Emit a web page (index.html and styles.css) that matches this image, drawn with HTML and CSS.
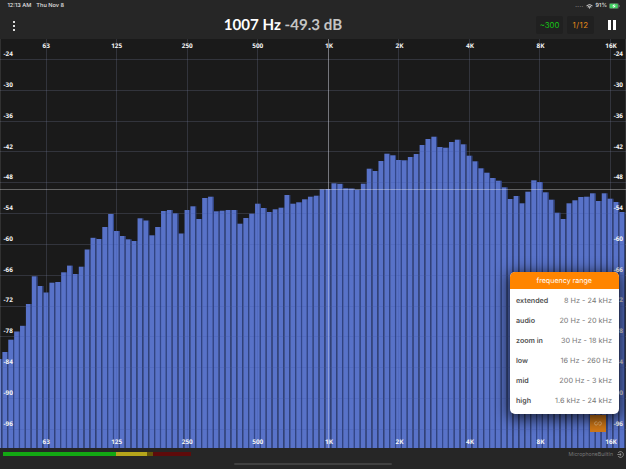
FILE: index.html
```html
<!DOCTYPE html>
<html lang="en">
<head>
    <meta charset="UTF-8">
    <meta name="viewport" content="width=device-width, initial-scale=1.0">
    <title>Spectrum Analyzer</title>
    <link rel="stylesheet" href="styles.css">
</head>
<body>
    <div class="app">
        <!-- System status -->
        <div class="system-bar">
            <div class="system-left">
                <span>12:13 AM</span>
                <span>Thu Nov 8</span>
            </div>
            <div class="system-right">
                <span class="signal">....</span>
                <svg class="wifi" viewBox="0 0 14 10">
                    <path d="M1 3.6Q7-1.4 13 3.6M3.3 6Q7 3 10.7 6" />
                    <path class="solid" d="M4.8 7.2Q7 5.6 9.2 7.2L7 9.6Z" />
                </svg>
                <span>91%</span>
                <svg class="battery" viewBox="0 0 11 6">
                    <rect class="shell" x=".4" y=".4" width="9.2" height="5.2" rx="1.2" />
                    <rect class="charge" x=".7" y=".7" width="8.2" height="4.6" rx=".8" />
                    <path class="bolt" d="M5.6.8L3 3.3H4.8L4.2 5.2L7 2.7H5.2Z" />
                    <path class="tip" d="M10.2 2v2" />
                </svg>
            </div>
        </div>

        <!-- Toolbar -->
        <header class="toolbar">
            <button class="menu-btn" aria-label="Menu">
                <i></i><i></i><i></i>
            </button>
            <h1 class="readout"><span id="frequency">1007 Hz</span> <span class="level">-49.3 dB</span></h1>
            <div class="toolbar-right">
                <button class="chip green">~300</button>
                <button class="chip orange">1/12</button>
                <button class="pause-btn" aria-label="Pause"><i></i><i></i></button>
            </div>
        </header>

        <!-- Spectrum -->
        <main class="spectrum">
            <svg id="chart" width="626" height="409" viewBox="0 39 626 409"></svg>

            <button class="range-btn" aria-label="Range">
                <svg viewBox="0 0 10 6"><path d="M4.2 1.4Q3.6.8 2.8.8a2 2 0 1 0 0 4.2Q4 5 5 3T7.2.8a2 2 0 1 1 0 4.2Q6.4 5 5.8 4.4" /></svg>
            </button>

            <div class="range-menu">
                <div class="range-title">frequency range</div>
                <ul>
                    <li><b>extended</b><span>8 Hz - 24 kHz</span></li>
                    <li><b>audio</b><span>20 Hz - 20 kHz</span></li>
                    <li><b>zoom in</b><span>30 Hz - 18 kHz</span></li>
                    <li><b>low</b><span>16 Hz - 260 Hz</span></li>
                    <li><b>mid</b><span>200 Hz - 3 kHz</span></li>
                    <li><b>high</b><span>1.6 kHz - 24 kHz</span></li>
                </ul>
            </div>
        </main>

        <!-- Input level -->
        <footer class="input-bar">
            <div class="meter">
                <i class="ok"></i><i class="warn"></i><i class="warn-off"></i><i class="clip-off"></i>
            </div>
            <div class="input-name">
                <span>MicrophoneBuiltIn</span>
                <svg viewBox="0 0 8 8"><path d="M1.2 2.2A3.3 3.3 0 1 1 1.2 5.8M.4 4H4.6M3.2 2.5L4.8 4L3.2 5.5" /></svg>
            </div>
            <div class="home-indicator"></div>
        </footer>
    </div>

    <script src="chart.js"></script>
</body>
</html>
```
FILE: styles.css
```css
:root {
    --panel: #262626;
    --chart: #1a1a1a;
    --bar: #5872c8;
    --bar-gap: #32478b;
    --orange: #ff8500;
}

* {
    margin: 0;
    padding: 0;
    box-sizing: border-box;
}

body {
    font-family: Inter, "Liberation Sans", sans-serif;
    background: var(--panel);
    color: #fff;
    overflow: hidden;
    text-rendering: geometricPrecision;
}

button {
    border: none;
    background: none;
    color: inherit;
    font: inherit;
}

.app {
    width: 626px;
    height: 469px;
    display: flex;
    flex-direction: column;
}

/* System status */
.system-bar {
    height: 12px;
    padding: 0 6px 0 7.5px;
    display: flex;
    justify-content: space-between;
    align-items: center;
    font-size: 5.6px;
    font-weight: 500;
    color: #e2e2e2;
}

.system-left {
    display: flex;
    gap: 5px;
}

.system-right {
    display: flex;
    align-items: center;
    gap: 2.5px;
}

.signal {
    color: #999;
    letter-spacing: 0.4px;
}

.wifi {
    width: 7px;
    height: 5px;
    fill: none;
    stroke: #eee;
    stroke-width: 1.7;
}

.wifi .solid {
    fill: #eee;
    stroke: none;
}

.battery {
    width: 11px;
    height: 6px;
    margin-left: -0.5px;
}

.battery .shell {
    fill: none;
    stroke: #777;
    stroke-width: 0.6;
}

.battery .charge {
    fill: #43cf62;
}

.battery .bolt {
    fill: #fff;
}

.battery .tip {
    stroke: #888;
    stroke-width: 0.7;
}

/* Toolbar */
.toolbar {
    height: 27px;
    display: grid;
    grid-template-columns: 120px 326px 1fr;
    align-items: center;
}

.menu-btn {
    width: 4px;
    margin-left: 12px;
    display: flex;
    flex-direction: column;
    align-items: center;
    gap: 2px;
}

.menu-btn i {
    width: 2px;
    height: 2px;
    background: #ddd;
}

.readout {
    font-family: Lato, sans-serif;
    font-size: 15.1px;
    line-height: 20px;
    font-weight: 700;
    white-space: nowrap;
    text-align: center;
    padding-bottom: 1px;
}

.readout .level {
    color: #c4c4c4;
}

.toolbar-right {
    display: flex;
    justify-content: flex-end;
    align-items: center;
    gap: 4px;
    padding: 0 10px 1px 0;
}

.chip {
    width: 27px;
    height: 18px;
    border-radius: 2px;
    background: #202020;
    font-size: 7.8px;
    line-height: 18px;
    text-align: center;
}

.green {
    color: #17c517;
}

.orange {
    color: #e88a18;
    letter-spacing: 0.5px;
}

.pause-btn {
    width: 8px;
    height: 10px;
    margin-left: 10px;
    display: flex;
    justify-content: space-between;
}

.pause-btn i {
    width: 3px;
    height: 10px;
    background: #fff;
}

/* Spectrum */
.spectrum {
    position: relative;
    height: 409px;
    background: var(--chart);
    overflow: hidden;
}

#chart {
    display: block;
}

.bar {
    fill: var(--bar);
}

.bar-gap {
    fill: var(--bar-gap);
}

.grid {
    stroke: #fff;
    stroke-opacity: 0.12;
}

.grid-over {
    stroke: #203580;
    stroke-opacity: 0.1;
}

.grid.edge {
    stroke-opacity: 0.1;
}

.cursor {
    stroke: #fff;
    stroke-opacity: 0.33;
}

.label {
    fill: #f4f4f4;
    font: 700 6.4px "Open Sans", sans-serif;
}

.mid {
    text-anchor: middle;
}

.end {
    text-anchor: end;
}

.range-btn {
    position: absolute;
    left: 590px;
    top: 376px;
    width: 16px;
    height: 17px;
    background: #d17918;
    display: flex;
    align-items: center;
    justify-content: center;
}

.range-btn svg {
    width: 8px;
    height: 5px;
    fill: none;
    stroke: #f5c78f;
    stroke-width: 0.9;
}

.range-menu {
    position: absolute;
    left: 509.5px;
    top: 233px;
    width: 109.5px;
    height: 142px;
    border-radius: 5px;
    background: #fff;
    overflow: hidden;
    box-shadow: 0 3px 14px 3px rgba(0, 0, 0, 0.65);
}

.range-title {
    height: 17px;
    line-height: 17px;
    background: var(--orange);
    font-size: 7.1px;
    text-align: center;
}

.range-menu ul {
    list-style: none;
    padding-top: 1px;
}

.range-menu li {
    height: 20.1px;
    padding: 0 7px 0 6.5px;
    display: flex;
    align-items: center;
    justify-content: space-between;
    font-size: 7.3px;
    color: #777;
    white-space: nowrap;
}

.range-menu b {
    font-size: 7.1px;
    color: #505050;
    font-weight: 600;
}

/* Input level */
.input-bar {
    position: relative;
    height: 21px;
    padding: 4px 2px 0 3px;
    display: flex;
    justify-content: space-between;
    align-items: flex-start;
}

.meter {
    display: flex;
    height: 4px;
}

.meter .ok {
    width: 113px;
    background: #13a713;
}

.meter .warn {
    width: 31px;
    background: #b5a51b;
}

.meter .warn-off {
    width: 6px;
    background: #645409;
}

.meter .clip-off {
    width: 38px;
    background: #5e0b0b;
}

.input-name {
    display: flex;
    align-items: center;
    gap: 4px;
    margin-top: -2px;
    height: 8px;
    font-size: 5.2px;
    color: #777;
    text-rendering: auto;
}

.input-name svg {
    width: 7px;
    height: 7px;
    fill: none;
    stroke: #aaa;
    stroke-width: 0.8;
}

.home-indicator {
    position: absolute;
    left: 234px;
    top: 15px;
    width: 158px;
    height: 2px;
    border-radius: 1px;
    background: #414141;
}
```
FILE: chart.js
```js
const NS = 'http://www.w3.org/2000/svg';
const chart = document.getElementById('chart');

// Top edge of each 1/12 octave band
const tops = [
    359, 352, 339.7, 331.5, 325.8, 304, 276.3, 286, 292.5, 282.7, 282, 272.3,
    265.6, 274, 266.7, 249.5, 237.8, 239, 227, 214, 231, 236, 239.3, 241,
    218.3, 220.5, 235.3, 227, 211, 210, 213.3, 233.5, 210, 206.3, 219, 198,
    196.7, 211.3, 210.7, 210, 210, 223.7, 218, 213.7, 203.7, 208, 212, 209.3,
    207.7, 195, 203.7, 202.3, 199.3, 196.7, 195.7, 189.3, 189, 183.3, 183.8, 188.3,
    188.5, 189.7, 183.7, 168.7, 171, 161, 153.7, 155.3, 160, 160.3, 157, 154,
    145, 139, 136.7, 147, 147.7, 142, 139.7, 144.3, 155.7, 161.3, 168.3, 172.7,
    178, 180.7, 187.3, 199, 196, 203.3, 191.7, 180.3, 182, 192.3, 199.7, 212.7,
    219, 203.3, 200.3, 197, 196.7, 193.3, 201, 193.3, 198.7, 202, 212
];
const freqs = ['63', '125', '250', '500', '1K', '2K', '4K', '8K', '16K'];
const step = 5.876;
const bottom = 448;

function add(tag, attrs, text) {
    const el = document.createElementNS(NS, tag);
    for (const key in attrs) el.setAttribute(key, attrs[key]);
    if (text) el.textContent = text;
    chart.appendChild(el);
}

function line(x1, y1, x2, y2, cls) {
    add('line', { x1, y1, x2, y2, class: cls });
}

const gridX = i => Math.floor(46.2 + i * 70.51) + 0.5;
const gridY = i => Math.floor(59.4 + i * 30.83) + 0.5;

function drawGrid(cls) {
    for (let i = 0; i < 9; i++) line(gridX(i), 39, gridX(i), bottom, cls);
    for (let i = 0; i < 13; i++) line(0, gridY(i), 626, gridY(i), cls);
}

drawGrid('grid');

tops.forEach((top, i) => {
    const x = 2.4 + (i - 1) * step;
    const gap = 1.1;
    add('rect', { x, y: top, width: step - gap, height: bottom - top, class: 'bar' });
    add('rect', { x: x + step - gap, y: top, width: gap, height: bottom - top, class: 'bar-gap' });
});

drawGrid('grid-over');
line(328.5, 39, 328.5, bottom, 'cursor');
line(0, 189.5, 626, 189.5, 'cursor');
line(0.5, 39, 0.5, bottom, 'grid edge');
line(625.5, 39, 625.5, bottom, 'grid edge');

freqs.forEach((f, i) => {
    const x = 46.2 + i * 70.51 + (i > 3 ? 0.8 : 0);
    add('text', { x, y: 48.3, class: 'label mid' }, f);
    add('text', { x, y: 443.9, class: 'label mid' }, f);
});

for (let i = 0; i < 13; i++) {
    const y = 56.3 + i * 30.77;
    add('text', { x: 3.5, y, class: 'label' }, String(-24 - i * 6));
    add('text', { x: 623, y, class: 'label end' }, String(-24 - i * 6));
}
```
